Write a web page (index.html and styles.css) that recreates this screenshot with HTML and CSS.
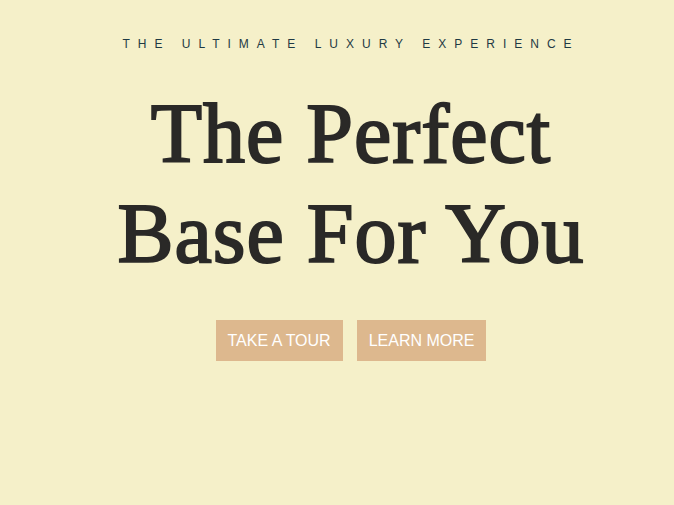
FILE: index.html
```html
<!DOCTYPE html>
<html lang="en">
<head>
<meta charset="utf-8">
<title>The Perfect Base For You</title>
<link rel="stylesheet" href="styles.css">
</head>
<body>
<main class="hero">
  <p class="tagline">THE ULTIMATE LUXURY EXPERIENCE</p>
  <h1 class="title">The Perfect<br>Base For You</h1>
  <div class="actions">
    <a class="btn" href="#">TAKE A TOUR</a>
    <a class="btn" href="#">LEARN MORE</a>
  </div>
</main>
</body>
</html>
```

FILE: styles.css
```css
html, body {
  margin: 0;
  padding: 0;
}
body {
  background: #f5f0c9;
  min-height: 505px;
  font-family: "Liberation Sans", Arial, sans-serif;
}
.hero {
  display: flex;
  flex-direction: column;
  align-items: center;
  padding: 37px 0 0 28px;
  text-align: center;
}
.tagline {
  margin: 0;
  font-size: 12px;
  line-height: 14px;
  letter-spacing: 8px;
  color: #1f3a44;
}
.title {
  margin: 33px 0 0;
  font-family: "Liberation Serif", "Times New Roman", serif;
  font-weight: 400;
  font-size: 84px;
  line-height: 100px;
  letter-spacing: 1px;
  color: #2a2927;
  -webkit-text-stroke: 2px #2a2927;
}
.actions {
  display: flex;
  gap: 14px;
  margin-top: 36px;
}
.btn {
  display: block;
  background: #ddb88e;
  color: #ffffff;
  text-decoration: none;
  font-size: 16px;
  line-height: 17px;
  padding: 12px 12px;
}
```
